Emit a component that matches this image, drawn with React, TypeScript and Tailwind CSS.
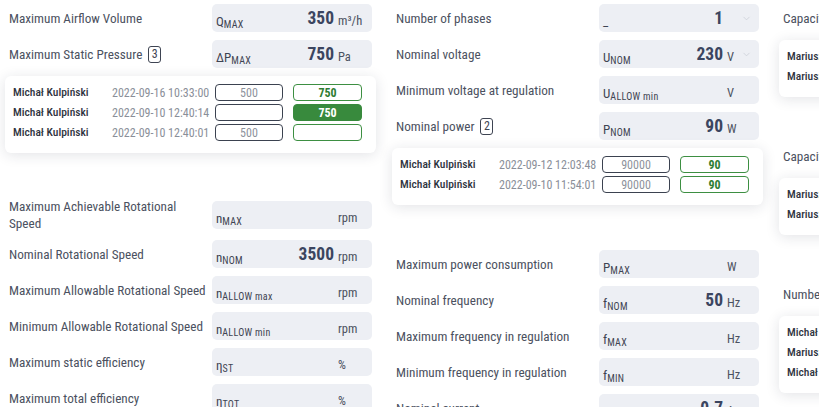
import React from "react";
import { ChevronDown } from "lucide-react";

type Row = {
  kind: "row";
  label: string;
  badge?: number;
  sym: [string, string];
  value?: string;
  unit?: string;
  chevron?: boolean;
};

type HistoryLine = {
  name: string;
  date: string;
  before: string;
  after: string;
  filled?: boolean;
};

type Card = { kind: "card"; lines: HistoryLine[] };

type Item = Row | Card;

const col1: Item[] = [
  { kind: "row", label: "Maximum Airflow Volume", sym: ["Q", "MAX"], value: "350", unit: "m³/h" },
  { kind: "row", label: "Maximum Static Pressure", badge: 3, sym: ["ΔP", "MAX"], value: "750", unit: "Pa" },
  {
    kind: "card",
    lines: [
      { name: "Michał Kulpiński", date: "2022-09-16 10:33:00", before: "500", after: "750" },
      { name: "Michał Kulpiński", date: "2022-09-10 12:40:14", before: "", after: "750", filled: true },
      { name: "Michał Kulpiński", date: "2022-09-10 12:40:01", before: "500", after: "" },
    ],
  },
  { kind: "row", label: "Maximum Achievable Rotational Speed", sym: ["n", "MAX"], unit: "rpm" },
  { kind: "row", label: "Nominal Rotational Speed", sym: ["n", "NOM"], value: "3500", unit: "rpm" },
  { kind: "row", label: "Maximum Allowable Rotational Speed", sym: ["n", "ALLOW max"], unit: "rpm" },
  { kind: "row", label: "Minimum Allowable Rotational Speed", sym: ["n", "ALLOW min"], unit: "rpm" },
  { kind: "row", label: "Maximum static efficiency", sym: ["η", "ST"], unit: "%" },
  { kind: "row", label: "Maximum total efficiency", sym: ["η", "TOT"], unit: "%" },
];

const col2: Item[] = [
  { kind: "row", label: "Number of phases", sym: ["_", ""], value: "1", chevron: true },
  { kind: "row", label: "Nominal voltage", sym: ["U", "NOM"], value: "230", unit: "V", chevron: true },
  { kind: "row", label: "Minimum voltage at regulation", sym: ["U", "ALLOW min"], unit: "V" },
  { kind: "row", label: "Nominal power", badge: 2, sym: ["P", "NOM"], value: "90", unit: "W" },
  {
    kind: "card",
    lines: [
      { name: "Michał Kulpiński", date: "2022-09-12 12:03:48", before: "90000", after: "90" },
      { name: "Michał Kulpiński", date: "2022-09-10 11:54:01", before: "90000", after: "90" },
    ],
  },
  { kind: "row", label: "Maximum power consumption", sym: ["P", "MAX"], unit: "W" },
  { kind: "row", label: "Nominal frequency", sym: ["f", "NOM"], value: "50", unit: "Hz" },
  { kind: "row", label: "Maximum frequency in regulation", sym: ["f", "MAX"], unit: "Hz" },
  { kind: "row", label: "Minimum frequency in regulation", sym: ["f", "MIN"], unit: "Hz" },
  { kind: "row", label: "Nominal current", sym: ["I", "NOM"], value: "0.7", unit: "A" },
];

const col3: Item[] = [
  { kind: "row", label: "Capacitance", sym: ["C", ""], value: "8", unit: "µF" },
  {
    kind: "card",
    lines: [
      { name: "Mariusz Nowicki", date: "2022-09-14 09:12:40", before: "6", after: "8" },
      { name: "Mariusz Nowicki", date: "2022-09-13 15:02:11", before: "", after: "6" },
    ],
  },
  { kind: "row", label: "Capacitor voltage", sym: ["U", "C"], value: "450", unit: "V" },
  {
    kind: "card",
    lines: [
      { name: "Mariusz Nowicki", date: "2022-09-14 09:12:52", before: "400", after: "450" },
      { name: "Mariusz Nowicki", date: "2022-09-13 15:02:30", before: "", after: "400" },
    ],
  },
  { kind: "row", label: "Number of poles", sym: ["p", ""], value: "2" },
  {
    kind: "card",
    lines: [
      { name: "Michał Kulpiński", date: "2022-09-16 10:33:12", before: "4", after: "2" },
      { name: "Mariusz Nowicki", date: "2022-09-12 08:41:05", before: "", after: "4" },
      { name: "Michał Kulpiński", date: "2022-09-10 12:40:22", before: "2", after: "" },
    ],
  },
];

function Symbol({ sym }: { sym: [string, string] }) {
  return (
    <span className="relative top-[1px] flex items-baseline leading-none text-[#3e4452]">
      <span className="text-[13px]">{sym[0]}</span>
      {sym[1] && <span className="relative top-[2px] text-[10px] tracking-[0.3px]">{sym[1]}</span>}
    </span>
  );
}

function Field({ row, wide }: { row: Row; wide: boolean }) {
  return (
    <div className="flex h-[28px] w-[160px] shrink-0 items-end rounded-[5px] bg-[#edeff4] pb-[5px] pl-[4px]">
      <Symbol sym={row.sym} />
      <span className="flex-1 text-right text-[17.5px] font-bold leading-none text-[#3b4560]">{row.value}</span>
      {wide ? (
        <span className="ml-[4px] w-[34px] whitespace-nowrap pr-[6px] text-[12.5px] leading-none text-[#4b5160]">
          {row.unit}
        </span>
      ) : (
        <>
          <span className="ml-[4px] w-[13px] whitespace-nowrap text-[12.5px] leading-none text-[#4b5160]">{row.unit}</span>
          <span className="mb-[3px] flex w-[13px] justify-center">
            {row.chevron && <ChevronDown size={11} strokeWidth={1.5} className="text-[#c6cad3]" />}
          </span>
          <span className="w-[6px]" />
        </>
      )}
    </div>
  );
}

function Badge({ n }: { n: number }) {
  return (
    <span className="ml-[6px] inline-flex h-[17px] w-[13px] items-center justify-center rounded-[3px] border-[1.5px] border-[#3e4452] text-[12px] leading-none text-[#3e4452]">
      {n}
    </span>
  );
}

function LabelRow({ row, wide }: { row: Row; wide: boolean }) {
  return (
    <div className="flex min-h-[28px] items-center">
      <div className="flex flex-1 items-center pl-[4px] pr-[4px] text-[13.2px] leading-[17px] text-[#4b5160]">
        <span>{row.label}</span>
        {row.badge !== undefined && <Badge n={row.badge} />}
      </div>
      <div className="mr-[4px]">
        <Field row={row} wide={wide} />
      </div>
    </div>
  );
}

function HistoryCard({ card }: { card: Card }) {
  return (
    <div className="mb-[37px] flex flex-col gap-[3px] rounded-[6px] bg-white pb-[12px] pl-[8px] pt-[8px] shadow-[0_2px_14px_rgba(30,40,60,0.13)]">
      {card.lines.map((l, i) => (
        <div key={i} className="flex h-[17px] items-center text-[11px] leading-none">
          <span className="w-[99px] whitespace-nowrap text-[11.5px] font-medium text-[#2f3440]">{l.name}</span>
          <span className="w-[103px] whitespace-nowrap text-[12px] text-[#8a8f99]">{l.date}</span>
          <span className="flex h-[17px] w-[68px] items-center justify-center rounded-[4px] border border-[#3b4250] text-[12px] text-[#8d929c]">
            {l.before}
          </span>
          <span
            className={
              l.filled
                ? "ml-[10px] flex h-[17px] w-[69px] items-center justify-center rounded-[4px] border border-[#388a3d] bg-[#388a3d] text-[12px] font-bold text-white"
                : "ml-[10px] flex h-[17px] w-[69px] items-center justify-center rounded-[4px] border border-[#3d8f42] text-[12px] font-bold text-[#2f7d33]"
            }
          >
            {l.after}
          </span>
        </div>
      ))}
    </div>
  );
}

function Column({ items, wide }: { items: Item[]; wide: boolean }) {
  return (
    <div className="flex w-[371px] shrink-0 flex-col gap-[8px]">
      {items.map((it, i) =>
        it.kind === "row" ? <LabelRow key={i} row={it} wide={wide} /> : <HistoryCard key={i} card={it} />
      )}
    </div>
  );
}

export default function App() {
  return (
    <div className="h-[407px] w-[819px] overflow-hidden bg-white font-[family-name:Roboto,sans-serif] font-stretch-semi-condensed">
      <div className="flex gap-[16px] pl-[5px] pt-[4px]">
        <Column items={col1} wide />
        <Column items={col2} wide={false} />
        <Column items={col3} wide={false} />
      </div>
    </div>
  );
}
